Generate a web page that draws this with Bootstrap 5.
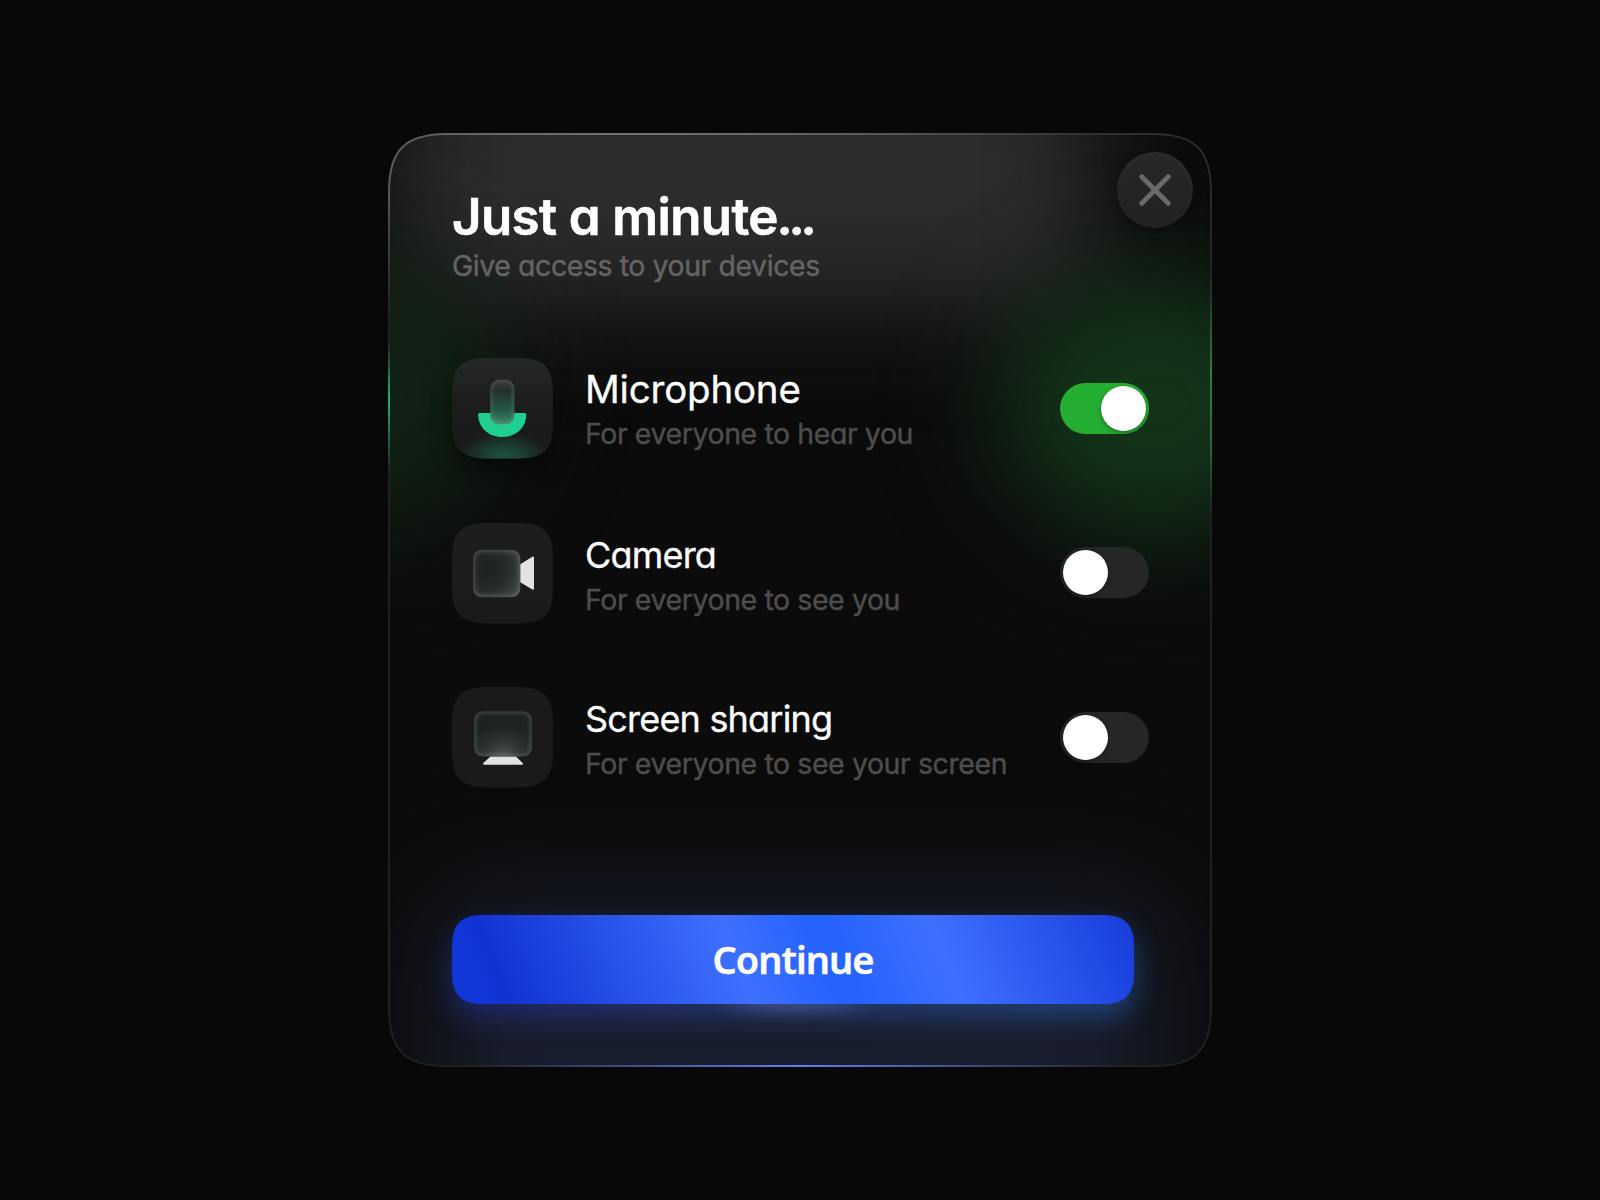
<!DOCTYPE html>
<html lang="en" data-bs-theme="dark">
<head>
<meta charset="utf-8">
<meta name="viewport" content="width=device-width, initial-scale=1">
<title>Just a minute...</title>
<link href="https://cdn.jsdelivr.net/npm/bootstrap@5.3.0/dist/css/bootstrap.min.css" rel="stylesheet">
<style>
  body { background: #080808; font-family: Inter, "Liberation Sans", sans-serif; font-feature-settings: "cv11" 1; color: #fff; }
  .dialog-box { width: 824px; height: 934px; padding: 59px 63.5px 62px 64px; }
  .backdrop { z-index: 0; overflow: visible; pointer-events: none; }
  .backdrop filter, .btn-go filter, .tile filter { color-interpolation-filters: sRGB; }
  .layer { z-index: 1; }
  .dialog-title { font-size: 51px; line-height: 50px; font-weight: 600; letter-spacing: -.6px; white-space: nowrap; -webkit-text-stroke: .6px #fff; }
  .title-dots { letter-spacing: -4.2px; margin-left: -1.5px; }
  .dialog-sub { font-size: 28.5px; line-height: 34px; color: #646464; white-space: nowrap; margin-top: 7px; letter-spacing: -.44px; -webkit-text-stroke: .4px #646464; }
  .btn-x { width: 76px; height: 76px; top: 19px; right: 19px; z-index: 2; background: linear-gradient(#272727, #222);
    box-shadow: 0 4px 9px rgba(0,0,0,.28), inset 0 3px 6px rgba(255,255,255,.03); }
  .device-list { margin-top: 75px; gap: 64.3px; }
  .device-row { height: 100.4px; }
  .tile { width: 101px; height: 100.4px; overflow: visible; margin-right: 32px; }
  .device-text { height: 100.4px; padding-top: 8px; }
  .device-name { font-size: 36px; line-height: 46px; white-space: nowrap; letter-spacing: -.8px; -webkit-text-stroke: .3px #fff; }
  .device-name.is-active { font-size: 38.5px; letter-spacing: -.2px; }
  .device-hint { font-size: 28.5px; line-height: 36px; color: #4d4d4d; white-space: nowrap; margin-top: 4px; letter-spacing: -.42px; -webkit-text-stroke: .4px #4d4d4d; }
  .device-name:not(.is-active) { padding-top: 1px; }
  .form-check-input.toggle { width: 89px; height: 51px; margin: 0; border: 0; border-radius: 26px; background: #252626 none; position: relative; }
  .form-check-input.toggle::before { content: ""; position: absolute; left: 3px; top: 3px; width: 45px; height: 45px; border-radius: 50%; background: #fff; box-shadow: 0 2px 5px rgba(0,0,0,.35); }
  .form-check-input.toggle:checked { background: #24ae32 none; }
  .form-check-input.toggle:checked::before { left: 41px; }
  .btn-go { width: 682px; height: 89px; margin-top: 127px; font-family: "Noto Sans", sans-serif; font-size: 38px; font-weight: 600; line-height: 89px; letter-spacing: -1px; -webkit-text-stroke: .4px #fff; }
  .btn-go svg { left: 0; top: 0; overflow: visible; }
</style>
</head>
<body class="min-vh-100 d-flex align-items-center justify-content-center overflow-hidden">
<main class="dialog-box position-relative d-flex flex-column">
  <svg class="backdrop position-absolute top-0 start-0" width="824" height="934" viewBox="0 0 824 934" fill="none" aria-hidden="true">
    <defs>
      <path id="shell" d="M1 59C1 17 17 1 59 1H765C807 1 823 17 823 59V875C823 917 807 933 765 933H59C17 933 1 917 1 875Z"/>
      <clipPath id="shellClip"><use href="#shell"/></clipPath>
      <filter id="glow" x="-400" y="-400" width="1700" height="1800" filterUnits="userSpaceOnUse"><feGaussianBlur stdDeviation="55"/></filter>
      <linearGradient id="eTop" gradientUnits="userSpaceOnUse" x1="0" y1="0" x2="824" y2="0">
        <stop offset="0" stop-color="#fff" stop-opacity=".27"/><stop offset=".3" stop-color="#fff" stop-opacity=".38"/><stop offset=".55" stop-color="#fff" stop-opacity=".28"/><stop offset=".85" stop-color="#fff" stop-opacity=".08"/><stop offset="1" stop-color="#fff" stop-opacity=".05"/>
      </linearGradient>
      <linearGradient id="fadeDown" gradientUnits="userSpaceOnUse" x1="0" y1="0" x2="0" y2="934">
        <stop offset="0" stop-color="#fff"/><stop offset=".05" stop-color="#fff"/><stop offset=".2" stop-color="#000"/>
      </linearGradient>
      <mask id="topMask" maskUnits="userSpaceOnUse" x="0" y="0" width="824" height="934"><rect width="824" height="934" fill="url(#fadeDown)"/></mask>
      <linearGradient id="eLeft" gradientUnits="userSpaceOnUse" x1="0" y1="208" x2="0" y2="338">
        <stop offset="0" stop-color="#1fb57c" stop-opacity="0"/><stop offset=".45" stop-color="#1fb57c"/><stop offset="1" stop-color="#1fb57c" stop-opacity="0"/>
      </linearGradient>
      <linearGradient id="eRight" gradientUnits="userSpaceOnUse" x1="0" y1="140" x2="0" y2="380">
        <stop offset="0" stop-color="#2f7d36" stop-opacity="0"/><stop offset=".4" stop-color="#2f7d36"/><stop offset=".7" stop-color="#2f7d36" stop-opacity=".85"/><stop offset="1" stop-color="#2f7d36" stop-opacity="0"/>
      </linearGradient>
      <linearGradient id="eBottom" gradientUnits="userSpaceOnUse" x1="80" y1="0" x2="740" y2="0">
        <stop offset="0" stop-color="#5f80ee" stop-opacity="0"/><stop offset=".5" stop-color="#5f80ee"/><stop offset="1" stop-color="#5f80ee" stop-opacity="0"/>
      </linearGradient>
    </defs>
    <use href="#shell" fill="#0b0b0b"/>
    <g clip-path="url(#shellClip)">
      <rect x="10" y="-90" width="695" height="262" fill="#2d2d2d" filter="url(#glow)"/>
      <ellipse cx="765" cy="272" rx="155" ry="130" fill="#14371a" fill-opacity=".95" filter="url(#glow)"/>
      <ellipse cx="-10" cy="260" rx="130" ry="140" fill="#122616" fill-opacity=".85" filter="url(#glow)"/>
      <rect x="50" y="764" width="724" height="340" fill="#191e2e" filter="url(#glow)"/>
    </g>
    <use href="#shell" stroke="#202020" stroke-width="2"/>
    <g mask="url(#topMask)"><use href="#shell" stroke="url(#eTop)" stroke-width="2"/></g>
    <path d="M1 208V338" stroke="url(#eLeft)" stroke-width="2"/>
    <path d="M823 140V380" stroke="url(#eRight)" stroke-width="2"/>
    <path d="M80 933H740" stroke="url(#eBottom)" stroke-width="2"/>
  </svg>

  <button type="button" class="btn-x btn border-0 rounded-circle position-absolute p-0 d-flex align-items-center justify-content-center" aria-label="Close">
    <svg width="32" height="32" viewBox="0 0 32 32" stroke="#6a6a6a" stroke-width="4.8" stroke-linecap="round"><path d="M2.8 2.8L29.2 29.2M29.2 2.8L2.8 29.2"/></svg>
  </button>

  <header class="layer">
    <h1 class="dialog-title mb-0">Just a minute<span class="title-dots">...</span></h1>
    <p class="dialog-sub mb-0">Give access to your devices</p>
  </header>

  <section class="device-list layer d-flex flex-column">
    <div class="device-row d-flex align-items-center">
      <svg class="tile flex-shrink-0" viewBox="0 0 101 100.4" aria-hidden="true">
        <defs>
          <path id="sq" d="M0 36C0 9 9 0 36 0H65C92 0 101 9 101 36V64.4C101 91.4 92 100.4 65 100.4H36C9 100.4 0 91.4 0 64.4Z"/>
          <clipPath id="sqClip"><use href="#sq"/></clipPath>
          <filter id="soft" x="-50%" y="-50%" width="200%" height="200%"><feGaussianBlur stdDeviation="10"/></filter>
          <filter id="rim" x="-20%" y="-20%" width="140%" height="140%"><feGaussianBlur stdDeviation="2"/></filter>
          <linearGradient id="tileG" x1="0" y1="0" x2="0" y2="1"><stop offset="0" stop-color="#242826"/><stop offset=".5" stop-color="#1b1d1c"/><stop offset="1" stop-color="#191b1a"/></linearGradient>
          <radialGradient id="tileGlow" gradientUnits="userSpaceOnUse" cx="0" cy="0" r="1" gradientTransform="translate(52 97) scale(44 22)"><stop offset="0" stop-color="#1d5342"/><stop offset=".45" stop-color="#1d5342" stop-opacity=".6"/><stop offset="1" stop-color="#1d5342" stop-opacity="0"/></radialGradient>
          <linearGradient id="pillG" x1="0" y1="0" x2="0" y2="1"><stop offset="0" stop-color="#363838"/><stop offset=".25" stop-color="#26302c"/><stop offset=".65" stop-color="#235542"/><stop offset="1" stop-color="#3a8a6b"/></linearGradient>
          <clipPath id="pillClip"><rect x="38.2" y="21.5" width="24.4" height="45" rx="9.5"/></clipPath>
        </defs>
        <use href="#sq" fill="#000" fill-opacity=".5" filter="url(#soft)" transform="translate(0 12)"/>
        <use href="#sq" fill="url(#tileG)"/>
        <g clip-path="url(#sqClip)"><rect y="70" width="101" height="31" fill="url(#tileGlow)"/></g>
        <path d="M27.4 55H73Q74.3 55 74.3 56.5C74.3 69.5 64 79 50.2 79S26.2 69.5 26.2 56.5Q26.2 55 27.4 55Z" fill="#1fcf8f"/>
        <g clip-path="url(#pillClip)">
          <rect x="38.2" y="21.5" width="24.4" height="45" fill="url(#pillG)"/>
          <rect x="38.2" y="21.5" width="24.4" height="45" rx="9.5" fill="none" stroke="#a8b8b0" stroke-opacity=".3" stroke-width="3" filter="url(#rim)"/>
        </g>
      </svg>
      <div class="device-text flex-grow-1">
        <div class="device-name is-active">Microphone</div>
        <div class="device-hint">For everyone to hear you</div>
      </div>
      <div class="form-check form-switch p-0 m-0 d-flex"><input class="form-check-input toggle" type="checkbox" role="switch" aria-label="Microphone" checked></div>
    </div>

    <div class="device-row d-flex align-items-center">
      <svg class="tile flex-shrink-0" viewBox="0 0 101 100.4" aria-hidden="true">
        <defs>
          <linearGradient id="tileC" x1="0" y1="0" x2="0" y2="1"><stop offset="0" stop-color="#1c1f1e"/><stop offset="1" stop-color="#1a1a1a"/></linearGradient>
          <radialGradient id="camG" gradientUnits="userSpaceOnUse" cx="34" cy="45" r="46"><stop offset="0" stop-color="#1c211e"/><stop offset=".5" stop-color="#282d2b"/><stop offset="1" stop-color="#4b504e"/></radialGradient>
          <clipPath id="camClip"><rect x="21" y="26.7" width="47.4" height="47.6" rx="9"/></clipPath>
        </defs>
        <use href="#sq" fill="url(#tileC)"/>
        <path d="M68.2 41.3L80.4 33.8Q82 33.1 82 34.7V65.5Q82 67.2 80.4 66.4L68.2 59.3Z" fill="#e2e2e2"/>
        <g clip-path="url(#camClip)">
          <rect x="21" y="26.7" width="47.4" height="47.6" fill="url(#camG)"/>
          <rect x="21" y="26.7" width="47.4" height="47.6" rx="9" fill="none" stroke="#9aa39f" stroke-opacity=".42" stroke-width="3" filter="url(#rim)"/>
        </g>
      </svg>
      <div class="device-text flex-grow-1">
        <div class="device-name">Camera</div>
        <div class="device-hint">For everyone to see you</div>
      </div>
      <div class="form-check form-switch p-0 m-0 d-flex"><input class="form-check-input toggle" type="checkbox" role="switch" aria-label="Camera"></div>
    </div>

    <div class="device-row d-flex align-items-center">
      <svg class="tile flex-shrink-0" viewBox="0 0 101 100.4" aria-hidden="true">
        <defs>
          <radialGradient id="scrG" gradientUnits="userSpaceOnUse" cx="0" cy="0" r="1" gradientTransform="translate(51 70) scale(38 32)"><stop offset="0" stop-color="#535856"/><stop offset=".5" stop-color="#303533"/><stop offset="1" stop-color="#1e2320"/></radialGradient>
          <clipPath id="scrClip"><rect x="22" y="24.2" width="58" height="45.4" rx="9"/></clipPath>
        </defs>
        <use href="#sq" fill="#1a1a1a"/>
        <path d="M38.4 69.4H64L70.6 76Q71.8 77.8 69.6 77.8H32.4Q30.2 77.8 31.4 76Z" fill="#e2e2e2"/>
        <g clip-path="url(#scrClip)">
          <rect x="22" y="24.2" width="58" height="45.4" fill="url(#scrG)"/>
          <rect x="22" y="24.2" width="58" height="45.4" rx="9" fill="none" stroke="#9aa39f" stroke-opacity=".42" stroke-width="3" filter="url(#rim)"/>
        </g>
      </svg>
      <div class="device-text flex-grow-1">
        <div class="device-name">Screen sharing</div>
        <div class="device-hint">For everyone to see your screen</div>
      </div>
      <div class="form-check form-switch p-0 m-0 d-flex"><input class="form-check-input toggle" type="checkbox" role="switch" aria-label="Screen sharing"></div>
    </div>
  </section>

  <button type="button" class="btn-go btn border-0 p-0 layer position-relative text-white flex-shrink-0">
    <svg class="position-absolute" width="682" height="89" viewBox="0 0 682 89" aria-hidden="true">
      <defs>
        <path id="pad" d="M0 32C0 9 9 0 32 0H650C673 0 682 9 682 32V57C682 80 673 89 650 89H32C9 89 0 80 0 57Z"/>
        <linearGradient id="goG" gradientUnits="userSpaceOnUse" x1="0" y1="0" x2="606" y2="-238">
          <stop offset="0" stop-color="#1236d8"/><stop offset=".033" stop-color="#1133d2"/><stop offset=".383" stop-color="#3e70ff"/><stop offset=".5" stop-color="#2663fd"/><stop offset=".54" stop-color="#2663fd"/><stop offset=".68" stop-color="#3e70ff"/><stop offset=".96" stop-color="#1a3fdc"/><stop offset="1" stop-color="#1a3fdc"/>
        </linearGradient>
        <linearGradient id="haloG"><stop offset="0" stop-color="#22309a"/><stop offset=".5" stop-color="#2e4a9c"/><stop offset="1" stop-color="#2360b0"/></linearGradient>
        <filter id="halo" x="-100" y="-100" width="900" height="320" filterUnits="userSpaceOnUse"><feGaussianBlur stdDeviation="13"/></filter>
        <filter id="spark" x="200" y="40" width="300" height="120" filterUnits="userSpaceOnUse"><feGaussianBlur stdDeviation="14 7"/></filter>
      </defs>
      <use href="#pad" fill="url(#haloG)" fill-opacity=".55" filter="url(#halo)" transform="translate(0 13)"/>
      <ellipse cx="342" cy="88" rx="66" ry="9" fill="#6a80c8" fill-opacity=".35" filter="url(#spark)"/>
      <use href="#pad" fill="url(#goG)"/>
    </svg>
    <span class="position-relative">Continue</span>
  </button>
</main>
<script src="https://cdn.jsdelivr.net/npm/bootstrap@5.3.0/dist/js/bootstrap.bundle.min.js"></script>
</body>
</html>
